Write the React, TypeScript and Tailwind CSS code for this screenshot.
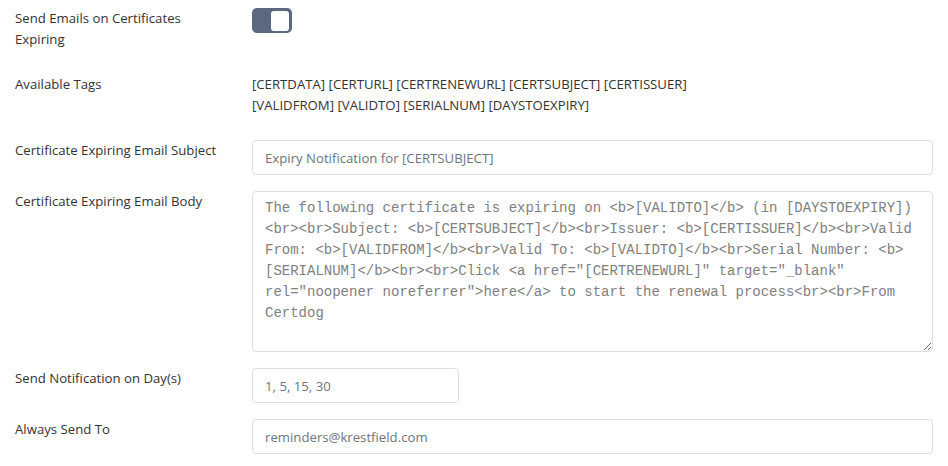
const bodyText =
  'The following certificate is expiring on <b>[VALIDTO]</b> (in [DAYSTOEXPIRY])<br><br>Subject: <b>[CERTSUBJECT]</b><br>Issuer: <b>[CERTISSUER]</b><br>Valid From: <b>[VALIDFROM]</b><br>Valid To: <b>[VALIDTO]</b><br>Serial Number: <b>[SERIALNUM]</b><br><br>Click <a href="[CERTRENEWURL]" target="_blank" rel="noopener noreferrer">here</a> to start the renewal process<br><br>From Certdog';

function Row({ label, className = '', children }: { label: string; className?: string; children: React.ReactNode }) {
  return (
    <div className={`flex ${className}`}>
      <label className="w-[237px] shrink-0 px-[15px] text-[13.2px] leading-[21px] text-[#333]">{label}</label>
      <div className="flex-1 px-[15px]">{children}</div>
    </div>
  );
}

const inputCls =
  'block h-[35px] rounded-[4px] border border-[#dcdfe3] bg-white px-[12px] text-[13.2px] text-[#6c757d] outline-none';

export default function App() {
  return (
    <div className="w-[948px] bg-white pt-[8px] font-['Open_Sans',sans-serif]">
      <Row label="Send Emails on Certificates Expiring" className="mb-[24px]">
        <div className="flex h-[25px] w-[40px] items-center justify-end rounded-[5px] bg-[#5b6880] pr-[3px]">
          <div className="h-[20px] w-[18px] rounded-[3px] bg-white" />
        </div>
      </Row>

      <Row label="Available Tags" className="mb-[24px]">
        <p className="text-[13.2px] leading-[21px] text-[#333]">
          [CERTDATA] [CERTURL] [CERTRENEWURL] [CERTSUBJECT] [CERTISSUER]
          <br />
          [VALIDFROM] [VALIDTO] [SERIALNUM] [DAYSTOEXPIRY]
        </p>
      </Row>

      <Row label="Certificate Expiring Email Subject" className="mb-4">
        <input className={`${inputCls} w-full`} defaultValue="Expiry Notification for [CERTSUBJECT]" readOnly />
      </Row>

      <Row label="Certificate Expiring Email Body" className="mb-4">
        <textarea
          className="block h-[161px] w-full rounded-[4px] border border-[#dcdfe3] bg-white px-[12px] py-[6px] font-['Liberation_Mono','Courier_New',monospace] text-[14px] leading-[21px] text-[#808080] outline-none"
          defaultValue={bodyText}
          readOnly
        />
      </Row>

      <Row label="Send Notification on Day(s)" className="mb-4">
        <input className={`${inputCls} w-[207px]`} defaultValue="1, 5, 15, 30" readOnly />
      </Row>

      <Row label="Always Send To">
        <input className={`${inputCls} w-full`} defaultValue="reminders@krestfield.com" readOnly />
      </Row>
    </div>
  );
}
